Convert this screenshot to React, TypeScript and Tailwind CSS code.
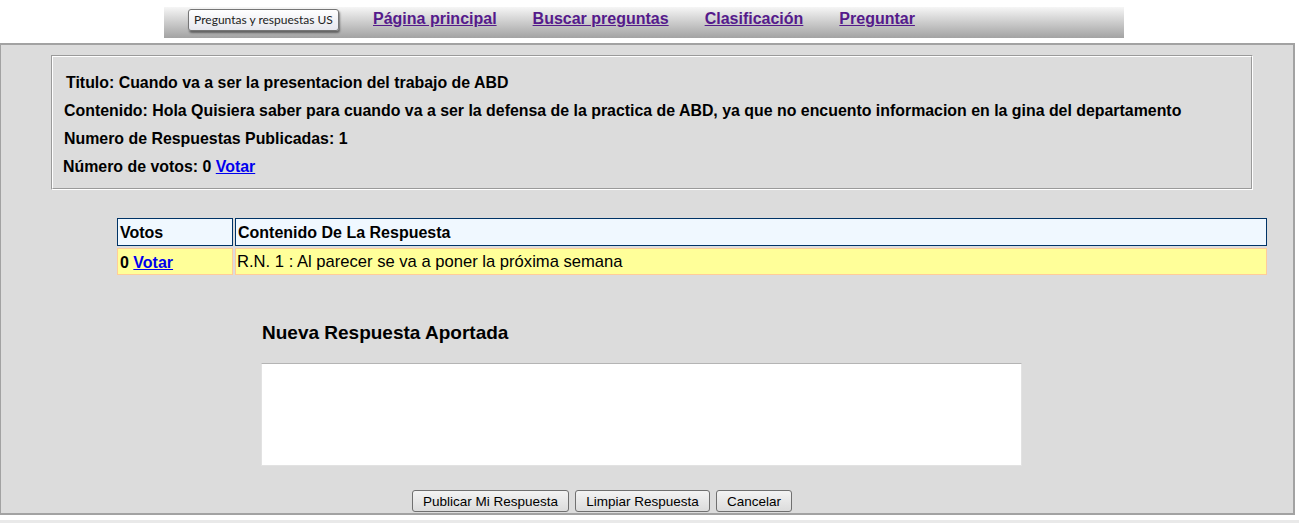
import React from 'react';

const arial = { fontFamily: '"Liberation Sans", Arial, sans-serif' };

const navLinks = ['Página principal', 'Buscar preguntas', 'Clasificación', 'Preguntar'];

const App: React.FC = () => {
  return (
    <div className="w-[1299px] h-[523px] bg-white overflow-hidden text-black" style={arial}>
      {/* Top menu bar */}
      <div className="pt-[7px]">
        <div className="ml-[164px] w-[960px] h-[31px] bg-linear-to-b from-[#f6f6f6] to-[#a3a3a3] flex items-start">
          <div
            className="ml-[24px] mt-[2px] w-[151px] h-[22px] rounded-[3px] border border-[#767676] bg-linear-to-b from-white to-[#e6e7ee] shadow-[1px_2px_2px_rgba(0,0,0,0.45)] flex items-center justify-center text-[12px] text-[#222]"
            style={{ fontFamily: 'Lato, "Noto Sans", sans-serif' }}
          >
            Preguntas y respuestas US
          </div>
          <nav className="ml-[34px] mt-[3px] flex gap-[36px]">
            {navLinks.map((l) => (
              <a key={l} href="#" className="text-[16px] font-bold text-[#551a8b] underline leading-[18px]">
                {l}
              </a>
            ))}
          </nav>
        </div>
      </div>

      {/* Main panel */}
      <div className="mt-[5px] w-[1295px] h-[472px] border-t-2 border-l border-r-2 border-b-2 border-[#a2a2a2] bg-[#dcdcdc]">
        {/* Question details box */}
        <div className="ml-[50px] mt-[10px] w-[1202px] border border-t-[#9a9a9a] border-l-[#9a9a9a] border-b-white border-r-white">
          <div className="h-[133px] border border-t-white border-l-white border-b-[#9a9a9a] border-r-[#9a9a9a] pl-[11px] pt-[12px] text-[15.9px] font-bold leading-7">
            <p className="ml-[2px]">Titulo: Cuando va a ser la presentacion del trabajo de ABD</p>
            <p>
              Contenido: Hola Quisiera saber para cuando va a ser la defensa de la practica de ABD, ya que no encuento
              informacion en la gina del departamento
            </p>
            <p>Numero de Respuestas Publicadas: 1</p>
            <p className="-ml-[1px]">
              Número de votos: 0{' '}
              <a href="#" className="text-[#0000ee] underline">
                Votar
              </a>
            </p>
          </div>
        </div>

        {/* Answers table */}
        <div className="ml-[116px] mt-[28px] w-[1150px] grid grid-cols-[116px_1fr] gap-[2px] text-[16px]">
          <div className="h-[28px] border border-[#003366] bg-[#f0f8ff] px-[2px] pt-[1px] flex items-center font-bold">Votos</div>
          <div className="h-[28px] border border-[#003366] bg-[#f0f8ff] px-[2px] pt-[1px] flex items-center font-bold">
            Contenido De La Respuesta
          </div>
          <div className="h-[27px] border border-[#ffcc99] bg-[#ffff99] px-[2px] pt-[2px] flex items-center font-bold">
            0&nbsp;
            <a href="#" className="text-[#0000ee] underline">
              Votar
            </a>
          </div>
          <div className="h-[27px] border border-[#ffcc99] bg-[#ffff99] px-[1px] pt-[2px] flex items-center text-[16.6px]">
            R.N. 1 : Al parecer se va a poner la próxima semana
          </div>
        </div>

        {/* New answer form */}
        <h2 className="ml-[261px] mt-[47px] text-[19px] font-bold leading-[22px]">Nueva Respuesta Aportada</h2>
        <textarea className="block ml-[260px] mt-[19px] w-[761px] h-[103px] bg-white border border-[#e2e2e2] border-t-[#b4b4b4] resize-none outline-none" />
        <div className="ml-[411px] mt-[24px] flex gap-[6px] text-[13.5px]">
          {[
            ['Publicar Mi Respuesta', 'w-[157px]'],
            ['Limpiar Respuesta', 'w-[135px]'],
            ['Cancelar', 'w-[76px]'],
          ].map(([label, w]) => (
            <button
              key={label}
              className={`${w} h-[22px] pt-[1px] rounded-[3px] border border-[#707070] bg-linear-to-b from-[#f3f3f3] to-[#dcdcdc] text-black leading-none`}
            >
              {label}
            </button>
          ))}
        </div>
      </div>
      <div className="mt-[5px] h-[10px] bg-[#e9e9e9]" />
    </div>
  );
};

export default App;
